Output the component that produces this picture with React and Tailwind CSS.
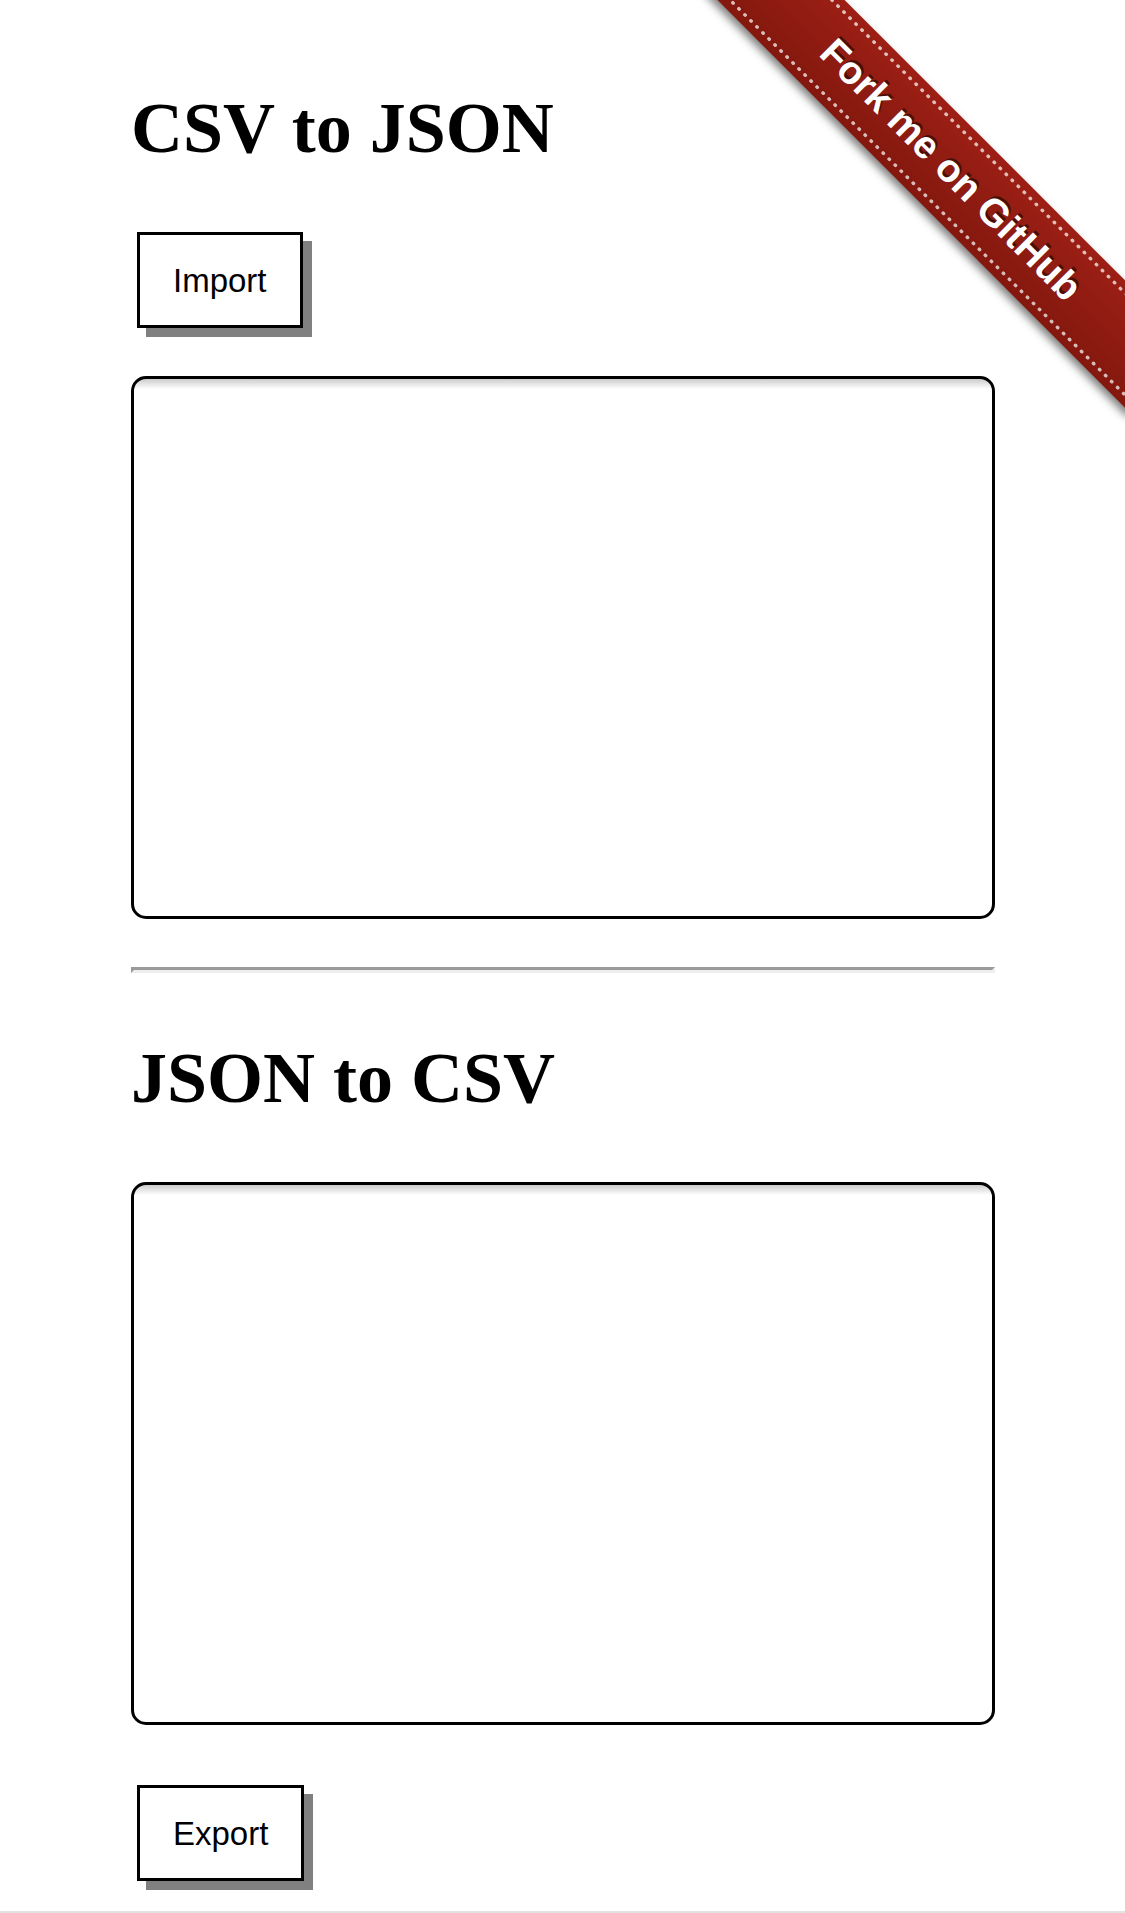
const buttonClass =
  'ml-[6px] block h-24 cursor-pointer border-3 border-black bg-white px-[33px] font-["Liberation_Sans",Arial,sans-serif] text-[33px] leading-none text-black shadow-[9px_9px_0_0_#808080]';

const headingClass =
  'font-["Liberation_Serif","Times_New_Roman",serif] text-[72px] font-bold leading-[80px] text-black';

const textareaClass =
  'block h-[543px] w-full resize-none rounded-[15px] border-3 border-black bg-white bg-[linear-gradient(to_bottom,#cccccc,#ffffff_10px)] bg-no-repeat p-3 font-["Liberation_Mono",monospace] text-[33px] text-black';

function Stitching() {
  return (
    <svg className="block h-1 w-full" aria-hidden="true">
      <line
        x1="0"
        y1="2"
        x2="100%"
        y2="2"
        stroke="#fff"
        strokeOpacity="0.7"
        strokeWidth="3.6"
        strokeLinecap="round"
        strokeDasharray="0.4 8.1"
      />
    </svg>
  );
}

function ForkRibbon() {
  return (
    <div className="pointer-events-none absolute top-0 right-0 size-[472px] overflow-hidden">
      <a
        href="#fork"
        className='pointer-events-auto absolute top-[125px] right-[-126px] flex h-[90px] w-[600px] rotate-45 flex-col justify-between bg-[linear-gradient(to_bottom,#9d1f15,#83180e)] px-[2px] py-[7px] text-center font-["Liberation_Sans",Arial,sans-serif] text-[39px] leading-[60px] font-bold text-white no-underline shadow-[0_5px_9px_0_rgba(0,0,0,0.5)] [text-shadow:0_-3px_0_rgba(0,0,0,0.5)]'
      >
        <Stitching />
        <span>Fork me on GitHub</span>
        <Stitching />
      </a>
    </div>
  );
}

export default function App() {
  return (
    <div className="relative overflow-hidden border-b-2 border-[#e2e2e2] bg-white">
      <main className="pt-[88px] pr-[130px] pb-[30px] pl-[131px]">
        <section>
          <h1 id="csv-title" className={headingClass}>CSV to JSON</h1>
          <button type="button" className={`mt-16 ${buttonClass}`}>Import</button>
          <textarea aria-labelledby="csv-title" className={`mt-12 ${textareaClass}`} />
        </section>
        <hr className="mt-12 h-[6px] border-3 border-t-[#9a9a9a] border-r-[#eeeeee] border-b-[#eeeeee] border-l-[#9a9a9a]" />
        <section className="mt-[65px]">
          <h1 id="json-title" className={headingClass}>JSON to CSV</h1>
          <textarea aria-labelledby="json-title" className={`mt-16 ${textareaClass}`} />
          <button type="button" className={`mt-15 ${buttonClass}`}>Export</button>
        </section>
      </main>
      <ForkRibbon />
    </div>
  );
}
